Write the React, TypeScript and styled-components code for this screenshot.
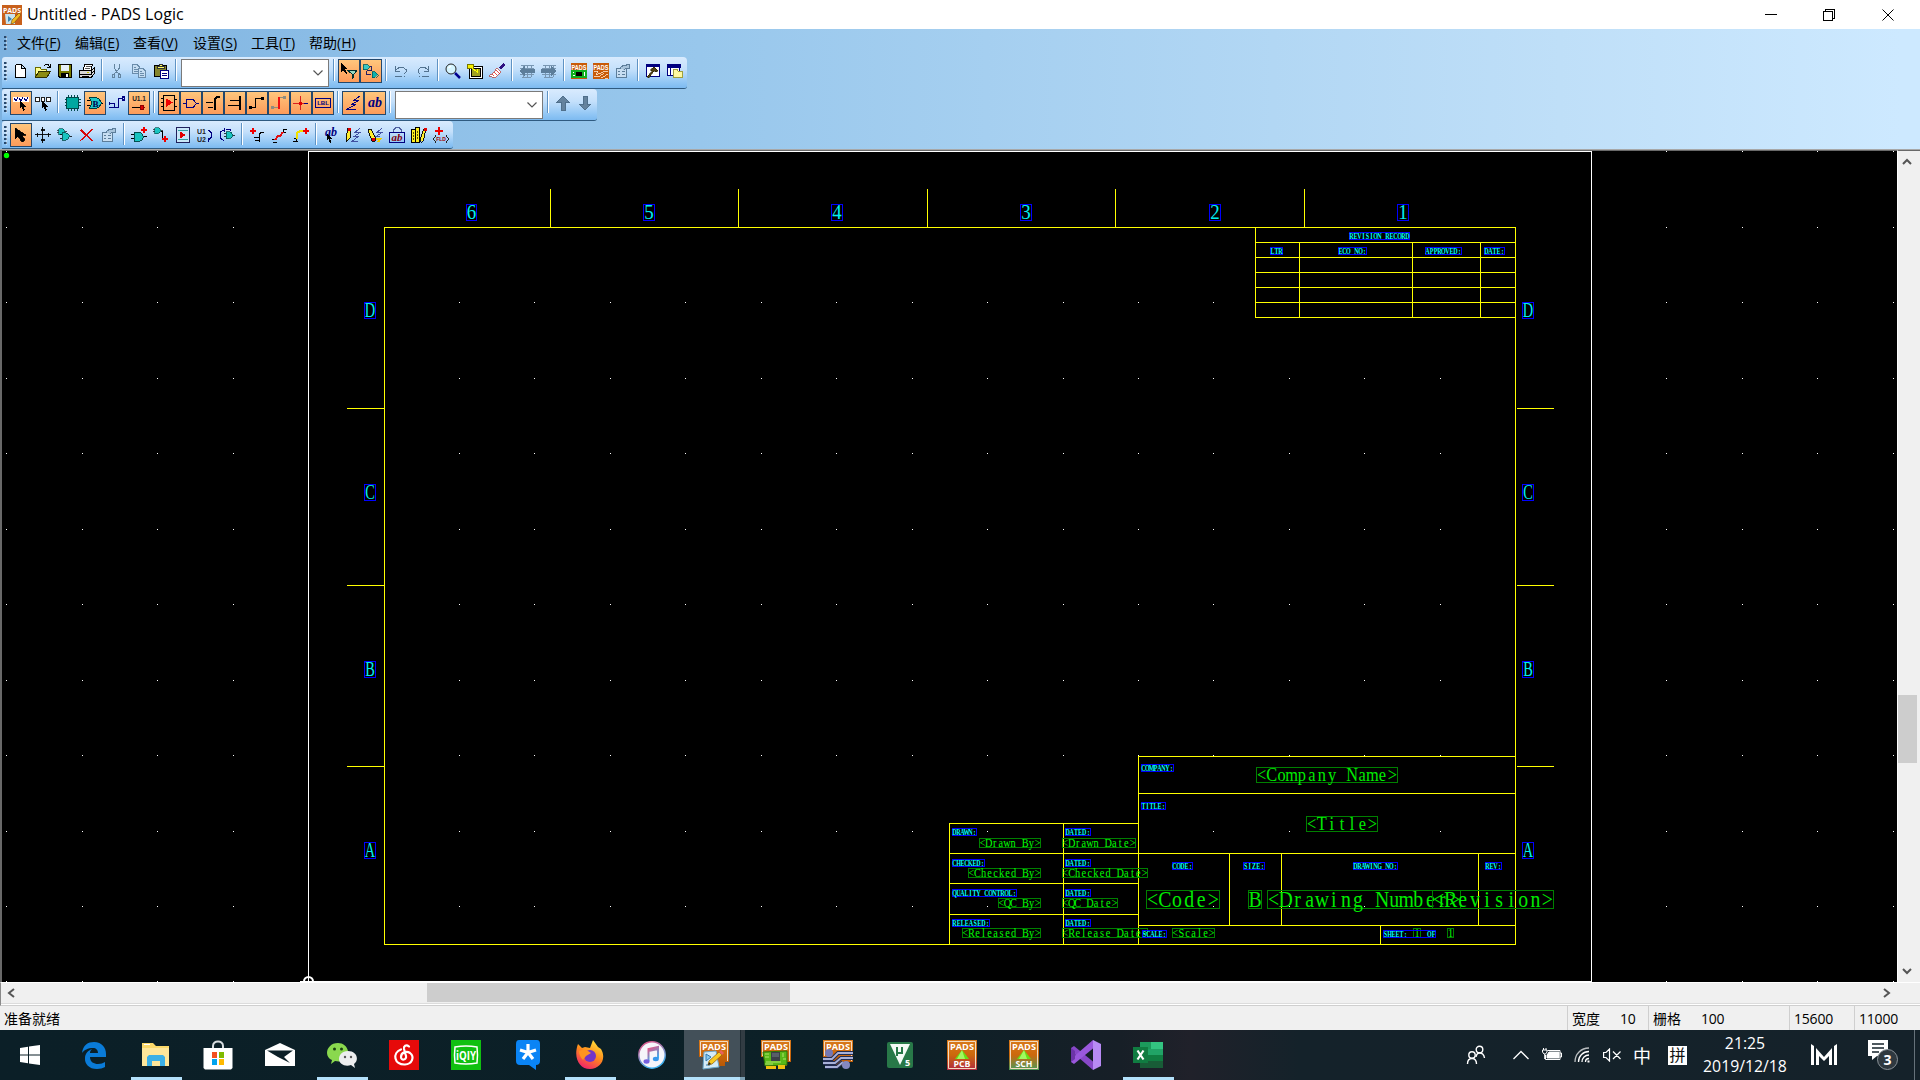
import React from "react";
import styled, { createGlobalStyle, css } from "styled-components";

const UI = `"Open Sans", "Noto Sans CJK SC", sans-serif`;
const SHEET_FONT = `"Liberation Serif", "DejaVu Serif", serif`;

const Global = createGlobalStyle`
  * { box-sizing: border-box; }
  body { margin: 0; background: #000; overflow: hidden; font-family: ${UI}; }
  svg { display: block; flex: none; }
`;

const Screen = styled.div`
  width: 1920px;
  height: 1080px;
  display: flex;
  flex-direction: column;
  overflow: hidden;
`;

/* ---------- title bar ---------- */

const TitleBar = styled.header`
  height: 29px;
  display: flex;
  align-items: center;
  padding-left: 2px;
  background: #fff;
`;
const TitleText = styled.span`
  flex: 1;
  margin: 0 0 1px 5px;
  font-size: 16px;
  letter-spacing: 0.04px;
  line-height: 26px;
  color: #000;
  white-space: nowrap;
`;
const WindowButton = styled.div`
  width: 58.5px;
  height: 29px;
  display: flex;
  align-items: center;
  justify-content: center;
`;
const WindowButtons = styled.div`
  display: flex;
  padding-right: 3px;
`;

/* ---------- menu and toolbars ---------- */

const Ribbon = styled.div`
  height: 120px;
  background: linear-gradient(90deg, #7cb1df 0, #8fc0e8 420px, #98c7ec 700px, #bfdff8 1560px, #cde9ff 1900px);
`;
const Grip = styled.i<{ $h?: number }>`
  width: 3px;
  height: ${(p) => p.$h ?? 19}px;
  flex: none;
  background: repeating-linear-gradient(180deg, #25476c 0 2px, transparent 2px 4px);
  border-right: 1px solid #ffffff66;
`;
const MenuBar = styled.nav`
  height: 28px;
  display: flex;
  align-items: center;
  padding: 0 0 1px 4px;
`;
const MenuItem = styled.span<{ $w: number }>`
  width: ${(p) => p.$w}px;
  font-size: 14px;
  line-height: 26px;
  color: #000;
  white-space: nowrap;
  small { font-size: 14px; letter-spacing: 0.1px; }
  u { text-underline-offset: 2px; }
`;
const MenuList = styled.div`
  display: flex;
  padding-left: 10px;
`;
const Toolbar = styled.div<{ $w: number; $h: number }>`
  width: ${(p) => p.$w}px;
  height: ${(p) => p.$h}px;
  margin-left: 2px;
  padding: 2px 0 0 2px;
  display: flex;
  align-items: flex-start;
  background: linear-gradient(180deg, #d9ebfe 0, #c4e0fb 40%, #8dc4f4 85%, #7dbaf0 100%);
  border-bottom: 1px solid #2f5a80;
  border-radius: 3px 4px 3px 0;
`;
const GripSlot = styled.div`
  width: 6px;
  height: 24px;
  display: flex;
  align-items: center;
`;
const ToolButton = styled.button<{ $on?: boolean }>`
  width: 22px;
  height: 24px;
  flex: none;
  padding: 0;
  border: 1px solid transparent;
  background: none;
  display: flex;
  align-items: center;
  justify-content: center;
  ${(p) =>
    p.$on &&
    css`
      border-color: #24486c;
      background: linear-gradient(180deg, #ffc67c, #fd9b5a);
    `}
`;
const Divider = styled.i`
  width: 8px;
  height: 22px;
  flex: none;
  background: linear-gradient(90deg, transparent 3px, #5f93c4 3px 4px, #fff 4px 5px, transparent 5px);
`;
const Combo = styled.div`
  width: 148px;
  height: 28px;
  margin: 0 1px;
  flex: none;
  background: #fff;
  border: 1px solid #7a7a7a;
  display: flex;
  align-items: center;
  justify-content: flex-end;
  padding-right: 5px;
`;

/* ---------- work area ---------- */

const WorkArea = styled.main`
  height: 833px;
  display: flex;
  border-top: 1px solid #a8a8a8;
  background: #f0f0f0;
`;
const SheetView = styled.div`
  width: 1897px;
  height: 832px;
  border-top: 1px solid #696969;
  border-left: 2px solid #696969;
`;
const VScroll = styled.div`
  width: 23px;
  display: flex;
  flex-direction: column;
  align-items: center;
  border-left: 1px solid #fff;
  border-top: 1px solid #696969;
  padding: 6px 4px 6px 0;
  background: #f0f0f0;
`;
const VThumb = styled.i`
  width: 19px;
  height: 68px;
  margin: 528px 0 auto;
  background: #cdcdcd;
`;
const HScroll = styled.div`
  height: 24px;
  display: flex;
  align-items: center;
  padding: 0 29px 3px 6px;
  background: #f0f0f0;
  border-top: 1px solid #fff;
  border-bottom: 1px solid #cfcfcf;
  box-shadow: inset 0 -1px #fff, inset 0 -2px #dcdcdc;
  border-left: 1px solid #8a8a8a;
`;
const HThumb = styled.i`
  width: 363px;
  height: 19px;
  margin: 0 auto 0 412px;
  background: #cdcdcd;
`;
const StatusBar = styled.footer`
  height: 24px;
  display: flex;
  align-items: stretch;
  justify-content: space-between;
  background: #f0f0f0;
  color: #000;
  font-size: 14px;
  line-height: 25px;
  padding-left: 4px;
`;
const StatusCells = styled.div`
  display: flex;
`;
const StatusCell = styled.div<{ $w: number }>`
  width: ${(p) => p.$w}px;
  display: flex;
  border-left: 1px solid #cfcfcf;
  padding-left: 4px;
  white-space: nowrap;
`;
const StatusValue = styled.span<{ $gap?: number }>`
  margin-left: ${(p) => p.$gap ?? 0}px;
  letter-spacing: -0.2px;
`;

/* ---------- taskbar ---------- */

const Taskbar = styled.div`
  height: 50px;
  display: flex;
  background: linear-gradient(90deg, #0b1f27 0, #0c2027 900px, #171f27 1120px, #20212a 1190px, #14222a 1300px, #15222a 1920px);
`;
const TaskSlot = styled.div<{ $running?: boolean; $active?: boolean }>`
  width: 62px;
  height: 50px;
  display: flex;
  align-items: center;
  justify-content: center;
  ${(p) =>
    p.$running &&
    css`
      background: linear-gradient(#b3e1fb, #b3e1fb) center bottom / 51px 3px no-repeat;
    `}
  ${(p) =>
    p.$active &&
    css`
      background: linear-gradient(90deg, transparent 1px, #b3e1fb 1px 57px, #7ea2b5 57px) left bottom / 100% 3px no-repeat,
        linear-gradient(90deg, transparent 1px, #435059 1px 57px, #1e2a31 57px 58px, #323c43 58px);
    `}
`;
const StartSlot = styled(TaskSlot)`
  width: 63px;
  padding-right: 3px;
`;
const TaskList = styled.div`
  display: flex;
  flex: 1;
`;
const Tray = styled.div`
  display: flex;
  align-items: center;
`;
const TrayItem = styled.div<{ $w: number }>`
  width: ${(p) => p.$w}px;
  height: 50px;
  display: flex;
  align-items: center;
  justify-content: center;
  color: #fff;
  font-size: 18px;
`;
const ImeBox = styled.span`
  width: 19px;
  height: 19px;
  background: #fff;
  color: #111;
  font-size: 16px;
  line-height: 18px;
  text-align: center;
`;
const Clock = styled.div`
  width: 106px;
  text-align: center;
  color: #fff;
  font-size: 15.8px;
  line-height: 23px;
  white-space: nowrap;
`;
const PeekEdge = styled.i`
  width: 6px;
  height: 50px;
  border-left: 1px solid #66727a;
`;

/* ---------- toolbar icons ---------- */

const Px = ({ children }: { children: React.ReactNode }) => (
  <svg width="16" height="16" viewBox="0 0 16 16" fill="none" shapeRendering="crispEdges">
    {children}
  </svg>
);

const NAVY = "#000080";
const TEAL = "#00a8a0";
const pointer = "M0 0V10L2 8L4 13L6 12L4 8H7Z";
const Gate = ({ x = 0, y = 0, s = 1 }: { x?: number; y?: number; s?: number }) => (
  <g transform={`translate(${x} ${y}) scale(${s})`}>
    <path d="M0 3.500H3M0 7.500H3M11 5.500H15" stroke="#000" />
    <path d="M3 1H7L10 2L12 5.500L10 9L7 10H3Z" fill="#18c4c0" stroke="#004a4a" strokeWidth={s < 1 ? 1 : 0.9} />
  </g>
);
const Plus = ({ x, y }: { x: number; y: number }) => (
  <path transform={`translate(${x} ${y})`} d="M2 0H4V2H6V4H4V6H2V4H0V2H2Z" fill="#f00000" />
);
const PadsSmall = ({ board }: { board?: boolean }) => (
  <>
    <path d="M0 0H16V16H0Z" fill="#c85a08" />
    <text x="8" y="6.500" fontSize="6.500" fontWeight="700" fill="#fff" textAnchor="middle" fontFamily="Liberation Sans, sans-serif" textLength="15" lengthAdjust="spacingAndGlyphs">
      PADS
    </text>
    {board ? (
      <>
        <path d="M0 7H16V15H0Z" fill="#10b020" />
        <path d="M5 9H11V13H5Z" fill="#000" />
        <path d="M2 9.500H3M2 12.500H4M13.500 9V13" stroke="#fff" />
      </>
    ) : (
      <path d="M1 9L5 8L3 12L10 9L15 8M1 14L7 13L11 10M8 15L15 11M12 15H15" stroke="#ffe8d0" strokeWidth=".8" />
    )}
  </>
);

const icons: Record<string, React.ReactNode> = {
  new: <path d="M2.500 1.500H8.500L12.500 5.500V14.500H2.500V1.500M8.500 2V5.500H12" fill="#fff" stroke="#000" />,
  open: (
    <>
      <path d="M.5 13.500V4.500H5L6 6H11.500V8" fill="#ffff90" stroke="#6b6b00" />
      <path d="M.5 14L4 8.500H15.500L12 14Z" fill="#8c8c10" stroke="#303000" />
      <path d="M9 3L11 1.500H13L14.500 4M15.500 1V4.500H12" stroke="#000" />
    </>
  ),
  save: (
    <>
      <path d="M1.500 1.500H14.500V14.500H3L1.500 13Z" fill="#777b00" stroke="#000" />
      <path d="M4 2H12V8H4Z" fill="#e6f0fa" />
      <path d="M4 10H12V15H4Z" fill="#000" />
      <path d="M9 11H11V14H9Z" fill="#fff" />
    </>
  ),
  print: (
    <>
      <path d="M4 7L6 1.500H13.500L12 7" fill="#fff" stroke="#000" />
      <path d="M7 3.500H12M6 5.500H11" stroke="#555" />
      <path d="M.5 7.500H12L15 5V11L12 14.500H.5Z" fill="#d8d8d8" stroke="#000" />
      <path d="M1 11.500H12V7M3 13.500H10M12 11L15 8" stroke="#000" />
      <path d="M8 9.500H10" stroke="#c8c800" />
    </>
  ),
  cut: <path d="M5.500 1V5L8 9L10.500 11M10.500 1V5L7.500 9L5 11M3.500 11.500H5.500V14.500H3.500ZM9.500 11.500H11.500V14.500H9.500Z" stroke="#64849f" />,
  copy: (
    <>
      <path d="M1.500 1.500H6L8.500 4V10.500H1.500ZM3 4.500H5M3 6.500H7M3 8.500H7" stroke="#6a8cab" fill="#c5ddf2" />
      <path d="M7.500 5.500H12L14.500 8V14.500H7.500ZM9 8.500H11M9 10.500H13M9 12.500H13" stroke="#6a8cab" fill="#c5ddf2" />
    </>
  ),
  paste: (
    <>
      <path d="M1.500 2.500H13.500V13.500H1.500Z" fill="#85852c" stroke="#000" />
      <path d="M4 3H11V5H4ZM6 1H9V3H6Z" fill="#ffff60" stroke="#333" />
      <path d="M7.500 7.500H15.500V15H7.500Z" fill="#fff" stroke={NAVY} />
      <path d="M9 10.500H14M9 12.500H14" stroke={NAVY} />
    </>
  ),
  filter: (
    <>
      <path transform="translate(-1 0)" d="M1 0V9L3 7L6 11L7 10L5 6H8Z" fill="#000" />
      <path d="M7 7.500H16L12.500 11.500V14L11.500 15.500V11.500Z" fill="#9ad8c0" stroke="#003030" />
    </>
  ),
  connect: (
    <>
      <path d="M0 1.500H4L6.500 3.500L4 6.500H0Z" fill="#38c8c4" stroke="#005c5c" strokeWidth=".8" />
      <path d="M6.500 3.500H8.500V7.500H3.500V11.500H8" stroke="#101060" strokeWidth=".9" />
      <path d="M9 8.500H12L15 11.500L12 14.500H9Z" fill="#10b0ac" stroke="#005c5c" strokeWidth=".8" />
    </>
  ),
  undo: <path d="M2.500 3V8.500H7M2.500 7.500L6 4.500H10L13 6.500V9L11 11M2 13.500H9M11 13.500H12" stroke="#52728f" />,
  redo: <path d="M13.500 3V8.500H9M13.500 7.500L10 4.500H6L3 6.500V9L5 11M14 13.500H7M5 13.500H4" stroke="#52728f" />,
  zoom: (
    <g shapeRendering="auto">
      <circle cx="6" cy="6" r="5" fill="#d5f5ff" stroke="#222" />
      <path d="M3.500 5L6 3" stroke="#fff" strokeWidth="1.500" />
      <path d="M10 10L15 15" stroke="#000090" strokeWidth="2.500" />
    </g>
  ),
  board: (
    <>
      <path d="M2.500 3.500H15.500V15.500H2.500Z" fill="#fff" stroke="#000" />
      <path d="M4.500 5.500H13.500V13.500H4.500Z" fill="#a0a020" stroke="#000" />
      <path d="M0 1H6V5H0Z" fill="#f7f000" stroke="#777700" />
      <path d="M5 5L10 9V6" stroke="#ff0" />
    </>
  ),
  redraw: (
    <>
      <path d="M14 0L10 5L12 7L16 2Z" fill="#301080" />
      <path d="M8 5L12 9L6 15L0 13L5 9Z" fill="#fff" stroke="#b04848" strokeWidth=".8" />
      <path d="M7 7L11 11M5 9L8 12M3 11L5 13" stroke="#e02020" strokeWidth=".8" />
    </>
  ),
  back: (
    <>
      <path d="M2 2.500H15M1 5.500H15M1 8.500H15M1 11.500H15M3 14.500H12M4.500 2V14M8.500 2V14M12.500 2V14" stroke="#7896b2" />
      <path d="M0 8L6 3V6H16V10H6V13Z" fill="#5c7d9a" />
    </>
  ),
  forward: (
    <>
      <path d="M2 2.500H15M1 5.500H15M1 8.500H15M1 11.500H15M3 14.500H12M4.500 2V14M8.500 2V14M12.500 2V14" stroke="#7896b2" />
      <path d="M16 8L10 3V6H0V10H10V13Z" fill="#5c7d9a" />
    </>
  ),
  padsBoard: <PadsSmall board />,
  padsRoute: <PadsSmall />,
  props: (
    <>
      <path d="M1.500 5.500H11.500V14.500H1.500Z" fill="#c8def2" stroke="#5c7d9a" />
      <path d="M3 8.500H5M7 8.500H10M3 11.500H5M7 11.500H10" stroke="#5c7d9a" />
      <path d="M5 5L8 2.500H11L12 1.500H14.500V5H11L9 7" fill="#a8c4dc" stroke="#5c7d9a" />
    </>
  ),
  hammer: (
    <>
      <path d="M1.500 1.500H14.500V13.500H1.500Z" fill="#fff" stroke={NAVY} />
      <path d="M1 1H15V4H1Z" fill={NAVY} />
      <path d="M5 7L9 4L13 8L11 9L9 8L4 15L2 14L7 8Z" fill="#504010" stroke="#201800" strokeWidth=".5" />
    </>
  ),
  explorer: (
    <>
      <path d="M.5 1.500H12.500V12.500H.5Z" fill="#fff" stroke={NAVY} />
      <path d="M0 1H13V4H0ZM3.500 3V12" fill={NAVY} stroke={NAVY} />
      <path d="M6.500 6.500H10L11 8H15.500V14.500H6.500Z" fill="#fff8a0" stroke="#a0a040" />
    </>
  ),
  selectAny: (
    <>
      <path d="M0 2H16V7H0Z" fill="#fff" />
      <path d="M1 3L3 6L5 2M6 3L8 6L10 2M11 3L13 6L15 2" stroke={NAVY} />
      <path transform="translate(7 5) scale(.85)" d={pointer} fill="#000" />
    </>
  ),
  selectNone: (
    <>
      <path d="M.5 2.500H4.500V6.500H.5ZM6.500 2.500H9.500V6.500H6.500ZM11.500 2.500H15.500V6.500H11.500Z" fill="#fff" stroke="#222" />
      <path transform="translate(7 5) scale(.85)" d={pointer} fill="#000" />
    </>
  ),
  chip: (
    <>
      <path d="M3.500 0V16M6.500 0V16M9.500 0V16M12.500 0V16M0 4.500H16M0 7.500H16M0 10.500H16" stroke="#004c4c" />
      <path d="M1.500 2.500H13.500V13.500H1.500Z" fill={TEAL} stroke="#004848" />
    </>
  ),
  gate: (
    <>
      <path d="M0 5.500H3M0 10.500H3M13 8.500H16" stroke="#000" />
      <path d="M2.500 2.500H9L12 4L14.500 8L12 12L9 13.500H2.500L4 10V6Z" fill="#1ec8c8" stroke="#003c3c" />
      <text x="5.500" y="11.500" fontSize="9" fontWeight="700" fill="#00004c" fontFamily="Liberation Serif, serif">B</text>
    </>
  ),
  net: <path d="M0 12.500H5.500V8M1 8.500H5.500M9.500 12.500V3.500H13M6 12.500H9M.5 7V10M13.500 2V5H15.500V2Z" stroke={NAVY} strokeWidth="1.200" />,
  pin: (
    <>
      <text x="8" y="6" fontSize="6.500" fontWeight="700" fill="#222" textAnchor="middle" fontFamily="Liberation Sans, sans-serif">U1.1</text>
      <path d="M1 12.500H9" stroke="#000" />
      <path d="M9 10.500H12.500V14.500H9ZM12 12.500H14" fill="#e00000" stroke="#900000" />
    </>
  ),
  part: (
    <>
      <path d="M2.500 .5H13.500V15.500H2.500ZM0 3.500H3M0 7.500H3M0 11.500H3M14 4.500H16M14 11.500H16" stroke="#000" />
      <path d="M5 3.500L12 7.500L5 12Z" fill="#f00000" />
    </>
  ),
  portOut: <path d="M0 8.500H3M3.500 4.500H10L13.500 8.500L10 12.500H3.500ZM13 8.500H16" stroke={NAVY} />,
  bus: (
    <>
      <path d="M9 15V4L11 1H15V3H12L11 5V15Z" fill="#000" />
      <path d="M1 7.500H8M3 12.500H8" stroke="#000" />
    </>
  ),
  busSegment: (
    <>
      <path d="M12 1H14V15H12Z" fill="#000" />
      <path d="M3 5.500H12M1 10.500H12" stroke="#000" />
    </>
  ),
  wire: (
    <>
      <path d="M3 12.500H6.500V3.500H13" stroke="#000" strokeWidth="1.400" />
      <path d="M0 11H3V14H0ZM12 2H15V5H12Z" fill="#000" />
    </>
  ),
  segment: (
    <>
      <path d="M3 12.500H7M9 2.500H12" stroke="#8d8d80" strokeWidth="1.400" />
      <path d="M0 11H3V14H0ZM12 1H15V4H12Z" fill="#8d8d80" />
      <path d="M7 2H9V14H7Z" fill="#f01010" />
    </>
  ),
  tie: (
    <>
      <path d="M7.500 1V15M0 8.500H12" stroke="#d82020" />
      <path d="M6 7H9V10H6Z" fill="#e00000" />
      <path d="M11 8.500H15" stroke={NAVY} />
    </>
  ),
  label: (
    <>
      <path d="M.5 3.500H15.500V12.500H.5Z" stroke={NAVY} />
      <text x="8" y="10.300" fontSize="6" fontWeight="700" fill={NAVY} textAnchor="middle" fontFamily="Liberation Sans, sans-serif">LBL</text>
    </>
  ),
  line: <path d="M15 1L9 5.500H14L6 9.500H11L1 14.500H11" stroke={NAVY} />,
  text: (
    <text x="8" y="12" fontSize="14" fontWeight="700" fontStyle="italic" fill={NAVY} textAnchor="middle" fontFamily="Liberation Serif, serif">ab</text>
  ),
  up: <path d="M8 1L14 7H10V15H6V7H2Z" fill="#64829d" stroke="#4f6f8b" />,
  down: <path d="M8 15L14 9H10V1H6V9H2Z" fill="#64829d" stroke="#4f6f8b" />,
  select: <path d="M2 1V12L5 9L9 15L12 13L9 8H13Z" fill="#000" stroke="#000" strokeWidth=".8" />,
  move: <path d="M7.500 0V16M0 7.500H16M6 2.500H10M6 13.500H10M2.500 5.500V10M13.500 5.500V10M5.500 3.500H9.500M5.500 12.500H9.500" stroke="#000" strokeWidth=".9" />,
  copyGate: (
    <>
      <Gate y={1} s={0.65} />
      <Gate x={3} y={5} s={0.8} />
    </>
  ),
  del: <path d="M1 3L14 14M14 2L1 14M2 2L13 13" stroke="#d80808" strokeWidth="1.300" />,
  addPart: (
    <>
      <Gate y={4} s={1.05} />
      <Plus x={10} y={0} />
    </>
  ),
  addNet: (
    <>
      <Gate x={0} y={0} s={0.65} />
      <path d="M8 4.500H9.500V11.500H12" stroke="#000" />
      <Plus x={9} y={9} />
    </>
  ),
  hier: (
    <>
      <path d="M1.500 .5H14.500V15.500H1.500Z" fill="#c9e7f8" stroke="#20205c" />
      <path d="M3 3.500H13M3 12.500H13" stroke="#30a0a0" />
      <path d="M5 4.500L11 8L5 11.500Z" fill="#e00000" />
    </>
  ),
  swapRef: (
    <>
      <text x="0" y="7" fontSize="7" fontWeight="700" fill="#222" fontFamily="Liberation Sans, sans-serif">U1</text>
      <text x="0" y="15" fontSize="7" fontWeight="700" fill="#222" fontFamily="Liberation Sans, sans-serif">U2</text>
      <path d="M11 3.500H12L14.500 6V10L12 12.500H11M12 11L11 13L12 15" stroke={NAVY} strokeWidth="1.200" />
    </>
  ),
  swapGate: (
    <>
      <Gate x={5} y={4} s={0.75} />
      <path d="M5 3L1.500 5V11L5 14M5.500 1V5M7 2.500H11L12 4" stroke={NAVY} />
    </>
  ),
  addBus: (
    <>
      <path d="M10.500 15V7L12 5.500H15M5 10.500H10M6 13.500H10" stroke="#000" strokeWidth="1.200" />
      <Plus x={1} y={1} />
    </>
  ),
  splitBus: (
    <>
      <path d="M1 12.500H4M2 15.500H6M12.500 2V5.500H15M12 2.500H16" stroke="#000" />
      <path d="M4 13L7 9H9L12 5" stroke="#e01010" strokeWidth="2" />
    </>
  ),
  extendBus: (
    <>
      <path d="M1 11.500H3.500V15M0 14.500H5" stroke="#000" />
      <path d="M4 12V6L7 4H11" stroke="#f0e000" strokeWidth="2" />
      <Plus x={10} y={1} />
    </>
  ),
  editText: (
    <>
      <text x="8" y="9" fontSize="12" fontWeight="700" fontStyle="italic" fill={NAVY} textAnchor="middle" fontFamily="Liberation Serif, serif">ab</text>
      <path transform="translate(4 6) scale(.75)" d={pointer} fill="#000" />
    </>
  ),
  draw: (
    <>
      <path d="M1 10L3 1H6L5 11L1 15Z" fill="#ffee30" stroke="#000" strokeWidth=".9" />
      <path d="M3 1H6V4H3Z" fill="#e00000" />
      <path d="M15 1L10 5.500H15L9 9.500H13L7 14.500H13" stroke="#4050a0" />
    </>
  ),
  modify: (
    <>
      <path d="M15 1L10 5.500H15L9 9.500H13" stroke="#4050a0" />
      <path d="M1 2H4L8 10V14H5L2 6Z" fill="#ffee30" stroke="#000" strokeWidth=".9" />
      <path d="M5 11H8V14H5Z" fill="#e00000" />
      <path d="M9 12H13L11 15" stroke="#f0d000" strokeWidth="2" />
    </>
  ),
  combine: (
    <>
      <path d="M.5 5.500H15.500V15.500H.5Z" stroke={NAVY} />
      <path d="M4.500 5V3L7 .5H10L12.500 3V5" stroke="#5060a0" />
      <text x="8" y="14" fontSize="11" fontWeight="700" fontStyle="italic" fill="#800010" textAnchor="middle" fontFamily="Liberation Serif, serif">ab</text>
    </>
  ),
  library: (
    <>
      <path d="M.5 2.500H4.500V15.500H.5ZM4.500 .5H8.500V15.500H4.500Z" fill="#ffee20" stroke="#000" />
      <path d="M6.500 4V12M2.500 5V13" stroke="#605800" strokeDasharray="2 1" />
      <g transform="translate(8.500 0)">
        <path d="M1 12L4 2H6.500L4 13L1 15Z" fill="#ffee30" stroke="#000" strokeWidth=".9" />
        <path d="M4 1H7V4H4Z" fill="#e00000" />
      </g>
    </>
  ),
  field: (
    <>
      <path d="M5 0H7V3H10V5H7V8H5V5H2V3H5Z" fill="#f00000" />
      <text x="8" y="14" fontSize="5" fontWeight="700" fill="#a00000" textAnchor="middle" fontFamily="Liberation Sans, sans-serif">FLD</text>
      <path d="M3 8.500L.5 12L3 15.500M13 8.500L15.500 12L13 15.500" stroke="#222" />
    </>
  ),
};

const Tools = ({ names, on = [] }: { names: string[]; on?: string[] }) => (
  <>
    {names.map((n, i) =>
      n === "|" ? (
        <Divider key={i} />
      ) : n === "combo" ? (
        <Combo key={i}>
          <svg width="10" height="6" viewBox="0 0 10 6" fill="none" stroke="#555" strokeWidth="1.200">
            <path d="M.5 .5L5 5L9.500 .5" />
          </svg>
        </Combo>
      ) : (
        <ToolButton key={i} $on={on.includes(n)} aria-label={n}>
          <Px>{icons[n]}</Px>
        </ToolButton>
      )
    )}
  </>
);

const standardTools = "new open save print | cut copy paste | combo | filter connect | undo redo | zoom board redraw | back forward | padsBoard padsRoute props | hammer explorer".split(" ");
const filterTools = "selectAny selectNone | chip gate net pin | part portOut bus busSegment wire segment tie label | line text | combo | up down".split(" ");
const editTools = "select move copyGate del props | addPart addNet hier swapRef swapGate | addBus splitBus extendBus | editText draw modify combine library field".split(" ");
const filterOn = "selectAny gate pin part portOut bus busSegment wire segment tie label line text".split(" ");

/* ---------- schematic sheet ---------- */

type Line = [number, number, number, number];
const frameLines: Line[] = [
  ...[550, 738, 927, 1115, 1304].map((x): Line => [x, 189, x, 227]),
  ...[408, 585, 766].flatMap((y): Line[] => [[347, y, 384, y], [1517, y, 1554, y]]),
  [1255, 227, 1255, 317],
  ...[242, 257, 272, 287, 302, 317].map((y): Line => [1255, y, 1515, y]),
  ...[1299, 1412, 1480].map((x): Line => [x, 242, x, 317]),
  [1138, 756, 1138, 944],
  ...[756, 793, 853, 925].map((y): Line => [1138, y, 1515, y]),
  ...[1229, 1281, 1478].map((x): Line => [x, 853, x, 925]),
  [1380, 925, 1380, 944],
  [949, 823, 949, 944],
  [1063, 823, 1063, 944],
  ...[823, 853, 883, 914].map((y): Line => [949, y, 1138, y]),
];

type Tag = [string, number, number, number];
const columnTags: Tag[] = [
  ["6", 466, 476, 204], ["5", 643, 654, 204], ["4", 831, 842, 204],
  ["3", 1020, 1031, 204], ["2", 1209, 1220, 204], ["1", 1397, 1408, 204],
];
const rowTags: Tag[] = ([["D", 302], ["C", 484], ["B", 661], ["A", 842]] as [string, number][]).flatMap(
  ([t, y]): Tag[] => [[t, 364, 375, y], [t, 1522, 1533, y]]
);
const captions: Tag[] = [
  ["REVISION RECORD", 1349, 1409, 232], ["LTR", 1270, 1282, 247], ["ECO NO:", 1338, 1366, 247],
  ["APPROVED:", 1425, 1461, 247], ["DATE:", 1484, 1504, 247],
  ["COMPANY:", 1141, 1173, 764], ["TITLE:", 1141, 1165, 802],
  ["DRAWN:", 952, 976, 828], ["DATED:", 1065, 1090, 828],
  ["CHECKED:", 952, 984, 859], ["DATED:", 1065, 1090, 859],
  ["QUALITY CONTROL:", 952, 1016, 889], ["DATED:", 1065, 1090, 889],
  ["RELEASED:", 952, 989, 919], ["DATED:", 1065, 1090, 919],
  ["CODE:", 1172, 1192, 862], ["SIZE:", 1243, 1264, 862],
  ["DRAWING NO:", 1353, 1397, 862], ["REV:", 1485, 1501, 862],
  ["SCALE:", 1142, 1166, 930], ["SHEET:     OF", 1383, 1435, 930],
];
const smallFields: Tag[] = [
  ["<Drawn By>", 979, 1040, 838], ["<Drawn Date>", 1062, 1135, 838],
  ["<Checked By>", 968, 1040, 868], ["<Checked Date>", 1062, 1147, 868],
  ["<QC By>", 998, 1040, 898], ["<QC Date>", 1062, 1117, 898],
  ["<Released By>", 962, 1040, 928], ["<Release Date>", 1062, 1147, 928],
  ["<Scale>", 1172, 1214, 928], ["1", 1413, 1420, 928], ["1", 1447, 1453, 928],
];
const mediumFields: Tag[] = [["<Company Name>", 1256, 1397, 767], ["<Title>", 1306, 1377, 816]];
const largeFields: Tag[] = [
  ["<Code>", 1146, 1219, 890], ["B", 1248, 1261, 890],
  ["<Drawing Number>", 1267, 1460, 890], ["<Revision>", 1432, 1553, 890],
];

interface TagGroupProps {
  tags: Tag[];
  h: number;
  size: number;
  drop: number;
  frame: string;
  ink: string;
  weight?: number;
  squeeze: number;
}

/* Every glyph is centred in a cell of equal width, as on the plotter grid. */
const TagGroup = ({ tags, h, size, drop, frame, ink, weight = 400, squeeze }: TagGroupProps) => (
  <g fontFamily={SHEET_FONT} fontSize={size} fontWeight={weight} textAnchor="middle">
    {tags.map(([t, x1, x2, y], i) => {
      const cell = (x2 - x1) / t.length;
      const xs = [...t].map((_, k) => ((x1 + 0.5 + cell * (k + 0.5)) / squeeze).toFixed(2)).join(" ");
      return (
        <g key={i}>
          <rect x={x1 + 0.5} y={y + 0.5} width={x2 - x1} height={h} fill="none" stroke={frame} shapeRendering="crispEdges" />
          <text x={xs} y={y + h - drop} transform={`scale(${squeeze} 1)`} fill={ink} style={{ whiteSpace: "pre" }}>
            {t}
          </text>
        </g>
      );
    })}
  </g>
);

const dots: [number, number][] = [];
for (let i = 0; i < 26; i++)
  for (let j = 0; j < 12; j++) dots.push([Math.floor(6.76 + i * 75.45), Math.floor(151.96 + j * 75.45)]);

const Sheet = () => (
  <svg width="1895" height="831" viewBox="2 151 1895 831">
    <rect x="2" y="151" width="1895" height="831" fill="#000" />
    <g fill="#fff" shapeRendering="crispEdges">
      {dots.map(([x, y]) => (
        <rect key={`${x}-${y}`} x={x} y={y} width="1" height="1" />
      ))}
    </g>
    <g fill="none" shapeRendering="crispEdges">
      <rect x="308.500" y="151.500" width="1283" height="830" stroke="#fff" />
      <rect x="384.500" y="227.500" width="1131" height="717" stroke="#ff0" />
      {frameLines.map(([a, b, c, d], i) => (
        <path key={i} d={`M${a + (a === c ? 0.5 : 0)} ${b + (b === d ? 0.5 : 0)}L${c + (a === c ? 0.5 : 0)} ${d + (b === d ? 0.5 : 0)}`} stroke="#ff0" />
      ))}
    </g>
    <circle cx="308.500" cy="981.500" r="4.500" fill="#000" stroke="#fff" strokeWidth="2" />
    <path d="M308.500 978V982M300 981.500H317" stroke="#fff" />
    <circle cx="6.500" cy="155.500" r="2.700" fill="#0f0" />
    <TagGroup tags={columnTags} h={16} size={20} drop={1} frame="#0000ff" ink="#00f0f0" squeeze={0.95} />
    <TagGroup tags={rowTags} h={16} size={20} drop={0.800} frame="#0000ff" ink="#00f0f0" squeeze={0.72} />
    <TagGroup tags={mediumFields} h={15} size={19.500} drop={0.500} frame="#008000" ink="#00ec00" squeeze={0.84} />
    <TagGroup tags={largeFields} h={18} size={23} drop={0.500} frame="#008000" ink="#00ec00" squeeze={0.86} />
    <TagGroup tags={smallFields} h={9} size={12} drop={0.300} frame="#008000" ink="#00ff00" squeeze={0.86} />
    <TagGroup tags={captions} h={7} size={8} drop={0.200} frame="#0000ff" ink="#00ffff" weight={700} squeeze={0.76} />
  </svg>
);

const Chevron = ({ d, w, h }: { d: string; w: number; h: number }) => (
  <svg width={w} height={h} viewBox={`0 0 ${w} ${h}`} fill="none" stroke="#555" strokeWidth="2">
    <path d={d} />
  </svg>
);

/* ---------- taskbar icons ---------- */

const SANS = "Open Sans, sans-serif";
const PadsTile = ({ kind }: { kind: "logic" | "layout" | "router" | "pcb" | "sch" }) => {
  const full = kind === "pcb" || kind === "sch";
  const gid = `tile-${kind}`;
  return (
    <svg width="30" height="30" viewBox="0 0 30 30">
      <defs>
        <linearGradient id={gid} x1="0" y1="0" x2="0" y2="1">
          <stop offset="0" stopColor="#d97a1c" />
          <stop offset=".5" stopColor="#cc680c" />
          <stop offset="1" stopColor={kind === "pcb" ? "#b02840" : kind === "sch" ? "#4c9a58" : "#b85806"} />
        </linearGradient>
      </defs>
      <path d={full ? "M0 0H30V30H0Z" : "M0 0H30V22H26V26H6V17H0Z"} fill={`url(#${gid})`} />
      <path d={full ? "M1.500 1.500H28.500V28.500H1.500Z" : "M1.500 16V1.500H28.500V21"} fill="none" stroke="#f3dcc0" />
      <text x="15" y="9.800" fontFamily={SANS} fontSize="9" fontWeight="700" fill="#fff" textAnchor="middle" textLength="24" lengthAdjust="spacingAndGlyphs">PADS</text>
      {full && (
        <>
          <path d="M15 10L22 19H8Z" fill="#66e014" />
          <path d="M15 10L18 19H10Z" fill="#a2f860" />
          <text x="15" y="26.500" fontFamily={SANS} fontSize="9" fontWeight="700" fill="#fff" textAnchor="middle" textLength="17" lengthAdjust="spacingAndGlyphs">{kind.toUpperCase()}</text>
        </>
      )}
      {kind === "logic" && (
        <>
          <path d="M5 12L17 11L20 27L4 29Z" fill="#d4ebf8" stroke="#6aa6c8" />
          <path d="M7 14V21L12 17ZM7 25H11" fill="#8ac8ec" stroke="#2c78b0" />
          <path d="M20 12L23 15L13 24L9 25L10 21Z" fill="#f8c820" stroke="#8a5c08" strokeWidth=".7" />
          <path d="M20 12L23 15L25 13L22 10Z" fill="#e86060" />
          <path d="M9 25L10 22L12 24Z" fill="#222" />
        </>
      )}
      {kind === "layout" && (
        <>
          <path d="M2 12L26 11V25L4 26Z" fill="#58b818" stroke="#2c7008" />
          <path d="M10 12H19V21H10Z" fill="#3c4048" />
          <path d="M11 13H18V17H11Z" fill="#585e68" />
          <path d="M4 14H8M4 17H8M22 13V17M22 19H25M5 22H20M4 24H12" stroke="#c8f080" strokeWidth=".8" />
          <path d="M5 26H15V29H5ZM17 25H24V29H17Z" fill="#f0c010" />
        </>
      )}
      {kind === "router" && (
        <>
          <path d="M0 19H9L15 13H30M0 23H12L18 18H30M2 27H14L20 22" stroke="#222b50" strokeWidth="4" fill="none" />
          <path d="M0 19H9L15 13H30M0 23H12L18 18H30M2 27H14L20 22" stroke="#a8b0d8" strokeWidth="1.800" fill="none" />
          <circle cx="6" cy="13" r="4" fill="#7478b4" />
          <circle cx="23" cy="25" r="4" fill="#8488c0" />
        </>
      )}
    </svg>
  );
};

const Svg30 = ({ children }: { children: React.ReactNode }) => (
  <svg width="30" height="30" viewBox="0 0 30 30" fill="none">{children}</svg>
);

const taskIcons: { id: string; icon: React.ReactNode; running?: boolean; active?: boolean }[] = [
  { id: "edge", icon: <Svg30><path d="M3 13C4 5 9 2 15 2C23 2 27 8 27 14V17H11C11 22 15 24 19 24C22 24 24 23 26 22V27C24 28 21 29 18 29C10 29 5.500 24 6 18C6 13 10 10 13 9C11 11 11 12 11 13H19C19 10 17 8 14 8C9 8 5 10 3 13Z" fill="#0a7bd8" /></Svg30> },
  { id: "files", running: true, icon: <Svg30><path d="M1 3H12L15 6H28V26H1Z" fill="#fbd96a" /><path d="M3 4H9V5H3Z" fill="#fff" /><path d="M1 8H28V26H1Z" fill="#ffe79a" /><path d="M6 26V17L8 15H22L24 17V26H19V21H11V26Z" fill="#3cb0e6" /></Svg30> },
  { id: "store", icon: <Svg30><path d="M10 9V6C10 0 20 0 20 6V9" stroke="#d8dde0" strokeWidth="2" /><path d="M.5 8H29.500V28L28 29.500H2L.5 28Z" fill="#fff" /><path d="M9 12H14V18H9Z" fill="#f25022" /><path d="M16 12H21V18H16Z" fill="#7fba00" /><path d="M9 19H14V25H9Z" fill="#00a4ef" /><path d="M16 19H21V25H16Z" fill="#ffb900" /></Svg30> },
  { id: "mail", icon: <Svg30><path d="M0 10L15 3L30 10V26H0Z" fill="#fff" /><path d="M2 10.500H28L19 17L25 23L13 17Z" fill="#0b1f27" /></Svg30> },
  { id: "wechat", running: true, icon: <Svg30><path d="M11 3C4 3 0 8 0 13C0 16 2 19 5 20L4 24L8 21C18 23 22 17 21 11C20 6 16 3 11 3Z" fill="#8ad84e" /><circle cx="7.500" cy="9" r="1.500" fill="#1b4010" /><circle cx="14.500" cy="9" r="1.500" fill="#1b4010" /><path d="M21 11C15 11 12 15 12 19C12 24 18 27 24 25L28 28L27 24C33 19 29 11 21 11Z" fill="#eceeef" /><circle cx="18" cy="17" r="1.200" fill="#555" /><circle cx="24" cy="17" r="1.200" fill="#555" /></Svg30> },
  { id: "music", icon: <Svg30><path d="M0 0H30V30H0Z" fill="#e60a0a" /><path d="M20 6.500C17 4 14.500 6 15 9L17 16C18 20 12 21 12 17C12 12 18 11 21 13C26 17 23 24 16 24.500C5 25 3 13 12 9.500" stroke="#fff" strokeWidth="2.200" strokeLinecap="round" /></Svg30> },
  { id: "video", icon: <Svg30><path d="M0 0H30V30H0Z" fill="#10c010" /><path d="M4 7Q15 5 26 7Q27 15 26 23Q15 25 4 23Q3 15 4 7Z" stroke="#fff" strokeWidth="1.500" /><text x="15" y="19.500" fontFamily={SANS} fontSize="12" fontWeight="700" fill="#fff" textAnchor="middle" textLength="20" lengthAdjust="spacingAndGlyphs">iQIY</text></Svg30> },
  { id: "notes", icon: <Svg30><path d="M6 0H24Q27 0 27 4V21Q27 25 23 25V30L16 25H7Q3 25 3 21V4Q3 0 6 0Z" fill="#0a84f5" /><path d="M15 12.500V4M15 12.500L7 10M15 12.500L23 10M15 12.500L10 19M15 12.500L20 19" stroke="#fff" strokeWidth="3.200" /></Svg30> },
  { id: "firefox", running: true, icon: <Svg30><defs><linearGradient id="fx" x1=".8" y1="0" x2=".3" y2="1"><stop offset="0" stopColor="#ffe83c" /><stop offset=".5" stopColor="#ff8a1c" /><stop offset="1" stopColor="#f0206c" /></linearGradient></defs><path d="M3 4L7 8L10 7L15 8L18 0L23 7L26 9C32 19 25 29 15 29C4 29-2 17 3 4Z" fill="url(#fx)" /><circle cx="15" cy="16" r="6" fill="#7434c8" /><path d="M4 11L10 9L16 13L11 16L8 20C5 17 4 14 4 11Z" fill="#ff9420" /></Svg30> },
  { id: "itunes", icon: <Svg30><defs><linearGradient id="it" x1="0" y1="0" x2=".4" y2="1"><stop offset="0" stopColor="#f05080" /><stop offset="1" stopColor="#3cb0f0" /></linearGradient></defs><circle cx="15" cy="15" r="13.200" fill="#f6f5fa" stroke="url(#it)" strokeWidth="1.500" /><path d="M11.500 21V9L21 7V18.500M11.500 11L21 9" stroke="url(#it)" strokeWidth="2" /><ellipse cx="9.500" cy="21.500" rx="3" ry="2.200" fill="#7860e0" /><ellipse cx="18.800" cy="19" rx="3" ry="2.200" fill="#3898ec" /></Svg30> },
  { id: "pads-logic", active: true, icon: <PadsTile kind="logic" /> },
  { id: "pads-layout", icon: <PadsTile kind="layout" /> },
  { id: "pads-router", icon: <PadsTile kind="router" /> },
  { id: "keil", icon: <Svg30><rect x="2" y="2" width="26" height="26" rx="2" fill="#287848" /><path d="M5 4H25L15 25Z" fill="#f4faf6" /><path d="M12 7V16M12 13H17M17 7V14" stroke="#287848" strokeWidth="2" /><text x="22.500" y="25.500" fontFamily={SANS} fontSize="9" fontWeight="700" fill="#fff" textAnchor="middle">5</text></Svg30> },
  { id: "pads-pcb", icon: <PadsTile kind="pcb" /> },
  { id: "pads-sch", icon: <PadsTile kind="sch" /> },
  { id: "vs", icon: <Svg30><path d="M0 8L3 6L25 24L22 30L0 11Z" fill="#8848c8" /><path d="M0 22L3 24L25 6L22 0L0 19Z" fill="#9a58dc" /><path d="M0 8V22L4 19V11Z" fill="#6c34a8" /><path d="M22 0L30 4V26L22 30Z" fill="#b88af4" /></Svg30> },
  { id: "excel", running: true, icon: <Svg30><path d="M7 2H19V28H7Z" fill="#1c9a5c" /><path d="M18 2H30V9H18Z" fill="#33c481" /><path d="M7 9H30V15H7Z" fill="#21a366" /><path d="M7 15H30V21H7Z" fill="#107c41" /><path d="M7 21H30V28H7Z" fill="#185c37" /><path d="M0 7H15V23H0Z" fill="#107c41" /><path d="M4.500 10.500L10.500 19.500M10.500 10.500L4.500 19.500" stroke="#fff" strokeWidth="2.200" /></Svg30> },
];

const menus: [string, string, number][] = [
  ["文件", "F", 58], ["编辑", "E", 58], ["查看", "V", 60], ["设置", "S", 58], ["工具", "T", 58], ["帮助", "H", 58],
];

export default function App() {
  return (
    <Screen>
      <Global />
      <TitleBar>
        <svg width="20" height="20" viewBox="0 0 20 20">
          <path d="M0 0H20V20H0Z" fill="#c8601c" />
          <path d="M3 9H13V19H4Z" fill="#c8e2ee" />
          <path d="M6 11V17L10 14Z" fill="#3884b4" />
          <path d="M17 8L19 10L12 18L9 19L10 15Z" fill="#f0b820" stroke="#704808" strokeWidth=".6" />
          <text x="10" y="7.500" fontSize="7.500" fontWeight="700" fontFamily={SANS} fill="#fff" textAnchor="middle" textLength="18" lengthAdjust="spacingAndGlyphs">PADS</text>
        </svg>
        <TitleText>Untitled - PADS Logic</TitleText>
        <WindowButtons>
          {["M0 5.500H12", "M.5 2.500H9.500V11.500H.5ZM2.500 2V.5H11.500V9.500H10", "M.5 .5L11.500 11.500M11.500 .5L.5 11.500"].map((d, i) => (
            <WindowButton key={i}>
              <svg width="12" height="12" viewBox="0 0 12 12" fill="none" stroke="#000" shapeRendering={i < 2 ? "crispEdges" : "auto"}>
                <path d={d} />
              </svg>
            </WindowButton>
          ))}
        </WindowButtons>
      </TitleBar>
      <Ribbon>
        <MenuBar>
          <Grip $h={14} />
          <MenuList>
            {menus.map(([name, key, w]) => (
              <MenuItem key={key} $w={w}>
                {name}<small>(<u>{key}</u>)</small>
              </MenuItem>
            ))}
          </MenuList>
        </MenuBar>
        <Toolbar $w={685} $h={32}>
          <GripSlot><Grip /></GripSlot>
          <Tools names={standardTools} on={["filter", "connect"]} />
        </Toolbar>
        <Toolbar $w={595} $h={32}>
          <GripSlot><Grip /></GripSlot>
          <Tools names={filterTools} on={filterOn} />
        </Toolbar>
        <Toolbar $w={451} $h={28}>
          <GripSlot><Grip /></GripSlot>
          <Tools names={editTools} on={["select"]} />
        </Toolbar>
      </Ribbon>
      <WorkArea>
        <SheetView>
          <Sheet />
        </SheetView>
        <VScroll>
          <Chevron w={10} h={10} d="M1 7L5 3L9 7" />
          <VThumb />
          <Chevron w={10} h={10} d="M1 3L5 7L9 3" />
        </VScroll>
      </WorkArea>
      <HScroll>
        <Chevron w={8} h={10} d="M7 1L2 5L7 9" />
        <HThumb />
        <Chevron w={8} h={10} d="M1 1L6 5L1 9" />
      </HScroll>
      <StatusBar>
        <span>准备就绪</span>
        <StatusCells>
          <StatusCell $w={81}>宽度<StatusValue $gap={20}>10</StatusValue></StatusCell>
          <StatusCell $w={141}>栅格<StatusValue $gap={20}>100</StatusValue></StatusCell>
          <StatusCell $w={65}><StatusValue>15600</StatusValue></StatusCell>
          <StatusCell $w={66}><StatusValue>11000</StatusValue></StatusCell>
        </StatusCells>
      </StatusBar>
      <Taskbar>
        <TaskList>
          <StartSlot>
            <svg width="20" height="20" viewBox="0 0 20 20" fill="#fff">
              <path d="M0 3L8 1.800V9.500H0ZM9 1.600L20 0V9.500H9ZM0 10.500H8V18.200L0 17ZM9 10.500H20V20L9 18.400Z" />
            </svg>
          </StartSlot>
          {taskIcons.map((t) => (
            <TaskSlot key={t.id} $running={t.running} $active={t.active}>{t.icon}</TaskSlot>
          ))}
        </TaskList>
        <Tray>
          <TrayItem $w={46}>
            <svg width="20" height="20" viewBox="0 0 20 20" fill="none" stroke="#fff" strokeWidth="1.400">
              <circle cx="13.500" cy="4.500" r="3.300" /><path d="M10 12C10.500 9 12 8 13.500 8C16 8 18 9.500 18.500 13" />
              <circle cx="6" cy="10" r="3.200" /><path d="M1.500 19C1.500 15 3.500 13.500 6 13.500S10.500 15 10.500 19" />
            </svg>
          </TrayItem>
          <TrayItem $w={43}>
            <svg width="16" height="10" viewBox="0 0 16 10" fill="none" stroke="#fff" strokeWidth="1.300"><path d="M.5 9L8 1.500L15.500 9" /></svg>
          </TrayItem>
          <TrayItem $w={19}>
            <svg width="20" height="14" viewBox="0 0 20 14" fill="none" stroke="#fff">
              <path d="M5.500 2.500H18V11.500H3.500V7M18 5H19.500V9H18" /><path d="M7 4H17V10H5V7Z" fill="#fff" /><path d="M.5 2H5V4L3.500 6H2L.5 4ZM1.500 0V2M4 0V2M2.700 6V11" />
            </svg>
          </TrayItem>
          <TrayItem $w={42}>
            <svg width="16" height="16" viewBox="0 0 16 16" fill="none" stroke="#fff" strokeWidth="1.300">
              <path d="M1 15C1 7 7 1 15 1" opacity=".7" /><path d="M4.500 15C4.500 9 9 4.500 15 4.500M8 15C8 11 11 8 15 8M11.500 15C11.500 13 13 11.500 15 11.500" /><path d="M13.500 13.500H15.500V15.500H13.500Z" fill="#fff" stroke="none" />
            </svg>
          </TrayItem>
          <TrayItem $w={18}>
            <svg width="18" height="14" viewBox="0 0 18 14" fill="none" stroke="#fff" strokeWidth="1.200">
              <path d="M.6 4.500H3L6.500 1V13L3 9.500H.6ZM10 3.500L17.500 11M17.500 3.500L10 11" />
            </svg>
          </TrayItem>
          <TrayItem $w={42}>中</TrayItem>
          <TrayItem $w={29}><ImeBox>拼</ImeBox></TrayItem>
          <Clock>21:25<br />2019/12/18</Clock>
          <TrayItem $w={52}>
            <svg width="26" height="22" viewBox="0 0 26 22" fill="#fff">
              <path d="M0 0L3 2V21H0ZM26 0L23 2V21H26ZM5 21V4L13 13L21 4V21H18V12L13 17L8 12V21Z" />
            </svg>
          </TrayItem>
          <TrayItem $w={64}>
            <svg width="28" height="30" viewBox="0 0 28 30" overflow="visible">
              <path d="M0 0H20V16H9L4 20V16H0Z" fill="#fff" />
              <path d="M4 4H16M4 8H16M4 12H11" stroke="#15222a" strokeWidth="1.300" />
              <circle cx="19.500" cy="19.500" r="10" fill="#2f3940" stroke="#8a9298" />
              <text x="19.500" y="24.500" fontFamily={SANS} fontSize="14" fontWeight="700" fill="#fff" textAnchor="middle">3</text>
            </svg>
          </TrayItem>
          <PeekEdge />
        </Tray>
      </Taskbar>
    </Screen>
  );
}
